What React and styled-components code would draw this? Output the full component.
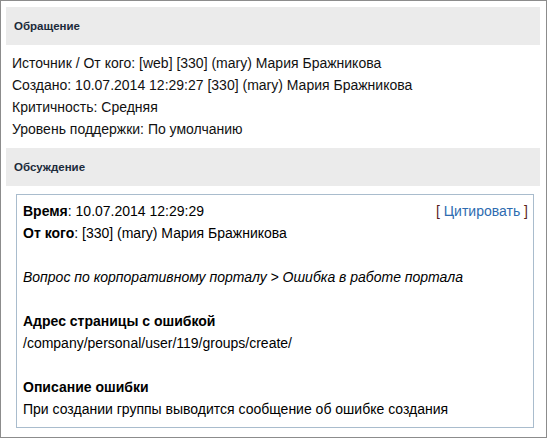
import React from 'react'
import styled, { createGlobalStyle } from 'styled-components'

const GlobalStyle = createGlobalStyle`
  html, body {
    margin: 0;
    padding: 0;
    background: #fff;
  }
  body {
    font-family: "Liberation Sans", Arial, sans-serif;
    font-size: 14px;
    color: #000;
  }
`

const Frame = styled.div`
  box-sizing: border-box;
  width: 547px;
  height: 438px;
  border: 1px solid #8c8c8c;
  padding: 6px 6px 0 5px;
  overflow: hidden;
`

const SectionHead = styled.div`
  height: 38px;
  background: #ebebeb;
  display: flex;
  align-items: center;
  padding-left: 8px;
  font-weight: bold;
  font-size: 11.5px;
  color: #1b2a3a;
`

const Info = styled.div`
  padding: 7px 0 8px 6px;
  line-height: 22px;
  color: #111;
`

const Message = styled.div`
  margin: 8px 6px 0 10px;
  border: 1px solid #a9bccd;
  padding: 5px 5px 7px 6px;
  line-height: 22px;
`

const Row = styled.div`
  display: flex;
  justify-content: space-between;
  min-height: 22px;
`

const Label = styled.b`
  font-weight: bold;
`

const Quote = styled.span`
  color: #5a1e1e;
`

const QuoteLink = styled.a`
  color: #2d6bb0;
  text-decoration: none;
  cursor: pointer;
`

const Topic = styled.div`
  font-style: italic;
`

const Heading = styled.div`
  font-weight: bold;
`

const Gap = styled.div`
  height: 22px;
`

export default function App() {
  return (
    <>
      <GlobalStyle />
      <Frame>
        <SectionHead>Обращение</SectionHead>
        <Info>
          <div>Источник / От кого: [web] [330] (mary) Мария Бражникова</div>
          <div>Создано: 10.07.2014 12:29:27 [330] (mary) Мария Бражникова</div>
          <div>Критичность: Средняя</div>
          <div>Уровень поддержки: По умолчанию</div>
        </Info>
        <SectionHead>Обсуждение</SectionHead>
        <Message>
          <Row>
            <span><Label>Время</Label>: 10.07.2014 12:29:29</span>
            <Quote>[ <QuoteLink>Цитировать</QuoteLink> ]</Quote>
          </Row>
          <div><Label>От кого</Label>: [330] (mary) Мария Бражникова</div>
          <Gap />
          <Topic>Вопрос по корпоративному порталу &gt; Ошибка в работе портала</Topic>
          <Gap />
          <Heading>Адрес страницы с ошибкой</Heading>
          <div>/company/personal/user/119/groups/create/</div>
          <Gap />
          <Heading>Описание ошибки</Heading>
          <div>При создании группы выводится сообщение об ошибке создания</div>
        </Message>
      </Frame>
    </>
  )
}
